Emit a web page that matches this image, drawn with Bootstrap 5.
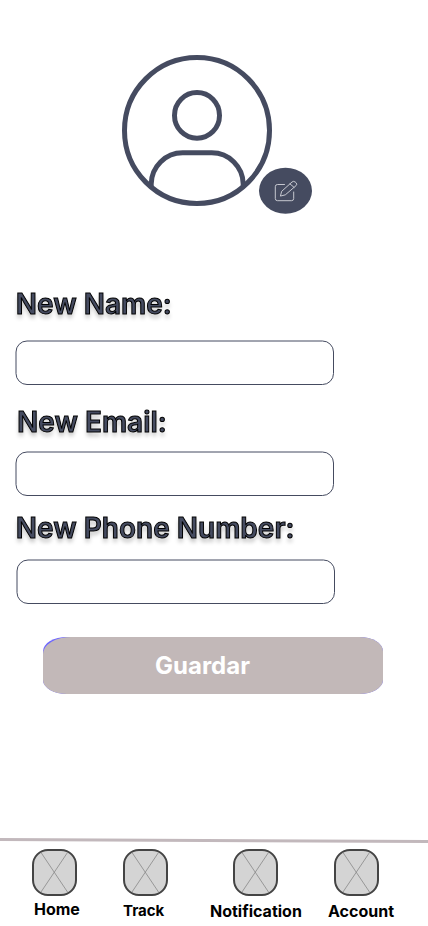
<!DOCTYPE html>
<html lang="en">
<head>
<meta charset="utf-8">
<meta name="viewport" content="width=device-width, initial-scale=1">
<title>Edit account</title>
<link href="https://cdn.jsdelivr.net/npm/bootstrap@5.3.0/dist/css/bootstrap.min.css" rel="stylesheet">
<style>
body{font-family:Inter,"Liberation Sans",sans-serif;background:#fff}
.screen{width:428px;height:926px}
.profile{height:287px;padding:50px 0 0 118px}
.profile svg,.tab svg,.divider svg,.field svg{display:block}
.field-label{font-size:28px;font-weight:600;line-height:34px;padding-left:.8px;color:#454b60;-webkit-text-stroke:1px #000;text-shadow:0 4px 4px rgba(0,0,0,.25);white-space:nowrap;will-change:transform}
.field-label.email{padding-left:2px}
.fields{padding-left:15px}
.field{width:320px;height:46px;position:relative}
.field svg{position:absolute;inset:0;pointer-events:none}
.field.shifted{margin-left:1px}
.g1{margin-top:18px}.g2{margin-top:20px}.g3{margin-top:11px}.g4{margin-top:15px}.g5{margin-top:13px}
.save{width:340px;height:57px;margin:33px 0 0 43px;padding:0 21px 0 0;border:0;border-radius:24px/14px;background:#6d66ff;color:#fff;font-size:24px;font-weight:700;position:relative;overflow:hidden;z-index:0}
.save:hover{color:#fff;background:#6d66ff}
.save::before{content:"";position:absolute;inset:0;background:#c2b8b8;border-radius:28px 0 0 0/17px 0 0 0;z-index:-1}
.divider{margin-top:143px}
.tabs{height:79px;padding-top:4px}
.tab{font-size:16px;font-weight:700;line-height:20px;color:#000;text-decoration:none;white-space:nowrap}
.tab svg{margin:0 auto 3px}
.t1{margin-left:32px;width:45px}.t2{margin-left:46px;width:45px}.t3{margin-left:65px;width:45px}.t4{margin-left:56px;width:45px}
.tab span{display:block}
.t1 span{margin-left:2px}.t2 span{font-size:15px;padding-top:2px}.t3 span{margin-left:-23px;padding-top:2px}.t4 span{margin-left:-6px;padding-top:2px}
</style>
<script src="https://cdn.jsdelivr.net/npm/bootstrap@5.3.0/dist/js/bootstrap.bundle.min.js"></script>
</head>
<body>
<svg width="0" height="0" class="position-absolute" aria-hidden="true">
<symbol id="placeholder" viewBox="0 0 45 47"><rect x="1" y="1" width="43" height="45" rx="15" fill="#d4d4d4" stroke="#444" stroke-width="2"/><path d="M9 3.500 35.500 43M35.500 3.500 9 43" stroke="#888" stroke-width=".8"/></symbol>
<symbol id="outline" viewBox="0 0 320 46"><rect x="1" y="2" width="317.500" height="43.500" rx="11" fill="none" stroke="#454b60"/></symbol>
</svg>
<main class="screen d-flex flex-column overflow-hidden">
<header class="profile">
<svg width="200" height="170" viewBox="118 50 200 170" fill="none" stroke="#454b60" stroke-width="5">
<ellipse cx="197" cy="130.500" rx="72.500" ry="73"/>
<ellipse cx="197" cy="115.400" rx="22.500" ry="22.800"/>
<path d="M151.200 186v-2a31.500 31.500 0 0 1 31.500-31.200h29a31.500 31.500 0 0 1 31.500 31.200v2"/>
<ellipse cx="285.500" cy="190.700" rx="26.500" ry="23" fill="#454b60" stroke="none"/>
<g stroke="#d5d6dc" stroke-width=".9" stroke-linejoin="round" stroke-linecap="round"><path d="M284.500 184.500H277.500q-2.200 0-2.200 2.200v11.800q0 2.200 2.200 2.200h14q2.200 0 2.200-2.200V192"/><path d="m280.500 195.700 1.200-4.400 10.300-9.300q1.600-1.300 3.200 0l.9.800q1.400 1.400 0 2.800l-10.500 9zM290 183.900l4.100 3.500"/></g>
</svg>
</header>
<form class="fields">
<label class="field-label d-block" for="name">New Name:</label>
<div class="field g1"><svg width="320" height="46"><use href="#outline"/></svg><input id="name" class="form-control h-100 border-0 bg-transparent"></div>
<label class="field-label email d-block g2" for="email">New Email:</label>
<div class="field g3"><svg width="320" height="46"><use href="#outline"/></svg><input id="email" class="form-control h-100 border-0 bg-transparent"></div>
<label class="field-label d-block g4" for="phone">New Phone Number:</label>
<div class="field shifted g5"><svg width="320" height="46"><use href="#outline"/></svg><input id="phone" class="form-control h-100 border-0 bg-transparent"></div>
</form>
<button type="button" class="btn save flex-shrink-0">Guardar</button>
<div class="divider"><svg width="428" height="8"><path d="M0 2.500 428 4.500" stroke="#c2b8bc" stroke-width="3"/></svg></div>
<nav class="tabs d-flex">
<a class="tab t1" href="#"><svg width="45" height="47"><use href="#placeholder"/></svg><span>Home</span></a>
<a class="tab t2" href="#"><svg width="45" height="47"><use href="#placeholder"/></svg><span>Track</span></a>
<a class="tab t3" href="#"><svg width="45" height="47"><use href="#placeholder"/></svg><span>Notification</span></a>
<a class="tab t4" href="#"><svg width="45" height="47"><use href="#placeholder"/></svg><span>Account</span></a>
</nav>
</main>
</body>
</html>
